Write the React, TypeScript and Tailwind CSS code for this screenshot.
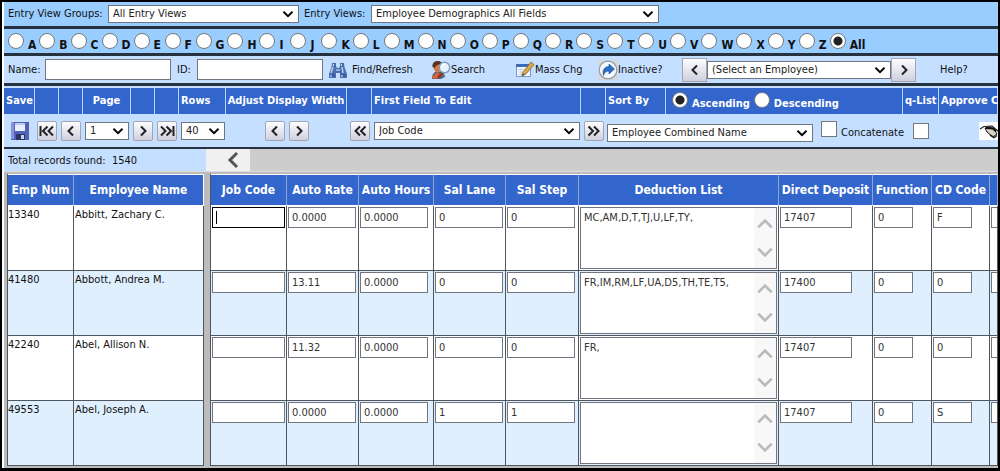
import { useState } from "react";
import type { ReactNode } from "react";

const letters: string[] = [..."ABCDEFGHIJKLMNOPQRSTUVWXYZ", "All"];

const fields = [
  "Job Code",
  "Auto Rate",
  "Auto Hours",
  "Sal Lane",
  "Sal Step",
  "Deduction List",
  "Direct Deposit",
  "Function",
  "CD Code",
  "",
];

const fieldWidths = [
  "w-[76px]",
  "w-[72px]",
  "w-[75px]",
  "w-[72px]",
  "w-[73px]",
  "w-[200px]",
  "w-[94px]",
  "w-[59px]",
  "w-[58px]",
  "",
];

const inputWidths = [
  "w-[73px]",
  "w-[68px]",
  "w-[68px]",
  "w-[68px]",
  "w-[68px]",
  "w-full",
  "w-[72px]",
  "w-[39px]",
  "w-[39px]",
  "w-[39px]",
];

const employees = [
  {
    id: "13340",
    name: "Abbitt, Zachary C.",
    values: ["", "0.0000", "0.0000", "0", "0", "MC,AM,D,T,TJ,U,LF,TY,", "17407", "0", "F", ""],
  },
  {
    id: "41480",
    name: "Abbott, Andrea M.",
    values: ["", "13.11", "0.0000", "0", "0", "FR,IM,RM,LF,UA,D5,TH,TE,T5,", "17400", "0", "0", ""],
  },
  {
    id: "42240",
    name: "Abel, Allison N.",
    values: ["", "11.32", "0.0000", "0", "0", "FR,", "17407", "0", "0", ""],
  },
  {
    id: "49553",
    name: "Abel, Joseph A.",
    values: ["", "0.0000", "0.0000", "1", "1", "", "17407", "0", "S", ""],
  },
];

const Chevron = ({ d, className }: { d: string; className: string }) => (
  <svg viewBox="0 0 16 16" className={className} fill="none" stroke="currentColor" aria-hidden="true">
    <path d={d} />
  </svg>
);

const LEFT = "M10 3.5 5.5 8l4.500 4.500";
const RIGHT = "M6 3.500 10.500 8 6 12.500";
const LEFT2 = "M8 3.500 3.500 8 8 12.500M13.500 3.500 9 8l4.500 4.500";
const RIGHT2 = "M2.500 3.500 7 8l-4.500 4.500M8 3.500 12.500 8 8 12.500";
const FIRST = "M1.500 3v10M8.500 3.500 4 8l4.500 4.500M14 3.500 9.500 8l4.500 4.500";
const LAST = "M14.500 3v10M2 3.500 6.500 8 2 12.500M7.500 3.500 12 8l-4.500 4.500";
const UP = "M2 11 8 5l6 6";
const DOWN = "M2 5l6 6 6-6";

const NavButton = ({ label, icon, big }: { label: string; icon: string; big?: boolean }) => (
  <button
    type="button"
    aria-label={label}
    className={`flex shrink-0 items-center justify-center border border-[#a3a5b3] bg-linear-to-b from-[#fdfdfe] to-[#cfd0de] text-[#222] ${
      big ? "h-6 w-[25px]" : "h-5 w-5 rounded-xs"
    }`}
  >
    <Chevron d={icon} className="h-4 w-4 stroke-2" />
  </button>
);

const Select = ({ label, value, className }: { label: string; value: string; className: string }) => (
  <div className={`relative shrink-0 ${className}`}>
    <select
      aria-label={label}
      className="block h-[18px] w-full appearance-none border border-[#6f7680] bg-white pl-1 text-[11px] leading-4 text-[#222]"
    >
      <option>{value}</option>
    </select>
    <Chevron d={DOWN} className="pointer-events-none absolute top-[3px] right-[5px] h-3 w-3 stroke-[2.5] text-black" />
  </div>
);

const Radio = ({
  name,
  label,
  checked,
  onChange,
  className,
}: {
  name: string;
  label: string;
  checked: boolean;
  onChange: () => void;
  className: string;
}) => (
  <label className={`flex shrink-0 items-start font-bold ${className}`}>
    <input
      type="radio"
      name={name}
      checked={checked}
      onChange={onChange}
      className="h-4 w-4 shrink-0 appearance-none rounded-full border border-[#777] bg-white checked:bg-[radial-gradient(circle,#222_4px,#fff_5px)]"
    />
    <span className="min-w-2 pt-1 leading-4">{label}</span>
  </label>
);

const BinocularsIcon = () => (
  <svg viewBox="0 0 20 18" className="h-[18px] w-5" aria-hidden="true">
    <path d="M4 2h4v3l1 2h2l1-2V2h4l.5 4L19 13v4h-7v-5H8v5H1v-4l2.500-7z" fill="#4c72b3" />
    <path d="M4.500 2.500h3v3h-3zM12.500 2.500h3v3h-3zM2 13h5v3H2zM13 13h5v3h-5z" fill="#3a5c9c" />
    <path d="M5 6 3 12M14 6l1 6M5.500 3v2M13.500 3v2M3 14v2M14 14v2" stroke="#c6daf5" strokeWidth="1.300" />
    <path d="M8 8h4v2H8z" fill="#8eabdc" />
  </svg>
);

const SearchIcon = () => (
  <svg viewBox="0 0 20 20" className="h-5 w-5" aria-hidden="true">
    <path d="M1 19c0-5 2-7 5-8l5 1c2 1 3 3 3 5l-4 2z" fill="#5a6684" />
    <path d="m1 18 5-6 3 2-4 5z" fill="#e0602c" />
    <ellipse cx="6.500" cy="7" rx="4" ry="5" fill="#d9793c" />
    <path d="M1.500 7C1 2.500 4 1 7 1c3 0 4 2 4 3L6 5 3.500 8z" fill="#5b3322" />
    <path d="m8 17 3-4" stroke="#8d3920" strokeWidth="2.500" strokeLinecap="round" />
    <circle cx="13.500" cy="7.500" r="5.200" fill="#e4f3fd" stroke="#7f9cbb" strokeWidth="1.400" />
    <path d="M10.500 7c.5-2 2-3 3.500-3" stroke="#fff" strokeWidth="1.500" fill="none" />
  </svg>
);

const MassChangeIcon = () => (
  <svg viewBox="0 0 20 18" className="h-[18px] w-5" aria-hidden="true">
    <path d="M1.500 3.500h14v12h-14z" fill="#f5f9ff" stroke="#7896c5" />
    <path d="M1 3h15v3H1z" fill="#3d68b8" />
    <path d="M3 8.500h7M3 11h5M3 13.500h4M6 7v8" stroke="#c3d3ea" />
    <path d="m16 1 3 2.500L11 13l-4 2 1-4z" fill="#dba94b" stroke="#7d6535" strokeWidth=".8" />
    <path d="m7 15 1.200-2.500 1.300 1.300z" fill="#4a3b25" />
  </svg>
);

const InactiveIcon = () => (
  <svg viewBox="0 0 20 20" className="h-5 w-5" aria-hidden="true">
    <path d="M0 0h20v20H0z" fill="#d5d7da" />
    <circle cx="10" cy="10" r="8.800" fill="#f4f8fc" stroke="#8f9cae" strokeWidth="1.200" />
    <path d="M5.500 15.500C4 10 6.500 6.500 11 6.500V4l5.500 5L11 14v-3c-2.500 0-4.500 1-5.500 4.500z" fill="#2c6fc4" stroke="#174c94" strokeWidth=".6" />
  </svg>
);

const SaveIcon = () => (
  <svg viewBox="0 0 18 18" className="h-[18px] w-[18px]" aria-hidden="true">
    <path d="M0 0h18v18H0z" fill="#5560b8" />
    <path d="M0 0h3v17H0z" fill="#8791dc" />
    <path d="M4 1h10v8H4z" fill="#e6effb" />
    <path d="M4 1h10v2H4z" fill="#b9cdf0" />
    <path d="M5 12h9v6H5z" fill="#2b3468" />
    <path d="M10 13h3v4h-3z" fill="#c5d1ee" />
  </svg>
);

const ApproveIcon = () => (
  <svg viewBox="0 0 24 18" className="h-[18px] w-6 shrink-0 bg-white" aria-hidden="true">
    <path d="m1 7 4-2.500 8-.5 7 6" fill="none" stroke="#222" strokeWidth="1.200" />
    <path d="m6 6 2 4 6 5 4-3-3-5-5-2z" fill="#d8d3c0" stroke="#111" />
    <path d="m7 6 7 .5 3 3" fill="none" stroke="#111" strokeWidth="2" />
    <path d="m11 13 4 2.500 3-2" fill="none" stroke="#222" strokeWidth="1.500" />
  </svg>
);

const HeadCell = ({ children, className = "" }: { children?: ReactNode; className?: string }) => (
  <div className={`flex h-[26px] items-center border-r border-[#b5d5ff] bg-[#3366cc] whitespace-nowrap ${className}`}>
    {children}
  </div>
);

const Checkbox = ({ label }: { label: string }) => (
  <input type="checkbox" aria-label={label} className="h-4 w-4 shrink-0 appearance-none border border-[#777] bg-white" />
);

const ActionButton = ({ icon, text, className }: { icon: ReactNode; text: string; className: string }) => (
  <button type="button" className={`flex shrink-0 items-center ${className}`}>
    {icon}
    {text}
  </button>
);

const headCell = "border-r border-[#8fa6cf] p-0 text-center whitespace-nowrap overflow-hidden";
const bodyCell = "border-r border-b border-[#50565e] p-0 align-top overflow-hidden";

const App = () => {
  const [letter, setLetter] = useState("All");
  const [order, setOrder] = useState("Ascending");

  return (
    <main className="overflow-hidden border-2 border-b-[3px] border-black bg-white pl-[2px] font-['DejaVu_Sans_Condensed','DejaVu_Sans',sans-serif] text-[11px] leading-4 text-[#111]">
      {/* Entry views */}
      <div className="flex h-6 items-center bg-[#99ccff] pl-1 whitespace-nowrap">
        <span className="w-[100px] shrink-0">Entry View Groups:</span>
        <Select label="Entry View Groups" value="All Entry Views" className="w-[191px]" />
        <span className="ml-[5px] w-[67px] shrink-0">Entry Views:</span>
        <Select label="Entry Views" value="Employee Demographics All Fields" className="w-[288px]" />
      </div>

      {/* Letter filter */}
      <div className="flex h-[30px] items-start border-y-[3px] border-[#26323f] bg-[#99ccff] pt-1 pl-1 text-xs">
        {letters.map((l) => (
          <Radio
            key={l}
            name="letter"
            label={l}
            checked={letter === l}
            onChange={() => setLetter(l)}
            className="mr-[3px] gap-1"
          />
        ))}
      </div>

      {/* Find bar */}
      <div className="flex h-[27px] items-center bg-[#c4dfff] pl-1 whitespace-nowrap">
        <label htmlFor="name" className="w-[37px] shrink-0">Name:</label>
        <input id="name" className="h-[21px] w-[126px] shrink-0 border border-[#6f7680] bg-white px-1" />
        <label htmlFor="emp-id" className="ml-[6px] w-5 shrink-0">ID:</label>
        <input id="emp-id" className="h-[21px] w-[126px] shrink-0 border border-[#6f7680] bg-white px-1" />
        <ActionButton icon={<BinocularsIcon />} text="Find/Refresh" className="ml-[5px] w-[103px] gap-1" />
        <ActionButton icon={<SearchIcon />} text="Search" className="w-[84px]" />
        <ActionButton icon={<MassChangeIcon />} text="Mass Chg" className="w-[83px]" />
        <ActionButton icon={<InactiveIcon />} text="Inactive?" className="w-[84px]" />
        <NavButton label="Previous employee" icon={LEFT} big />
        <Select label="Employee" value="(Select an Employee)" className="w-[184px]" />
        <NavButton label="Next employee" icon={RIGHT} big />
        <a href="#help" className="ml-6">Help?</a>
      </div>

      {/* Paging and sorting */}
      <div className="grid grid-cols-[31px_24px_24px_48px_24px_24px_47px_121px_25px_209px_25px_60px_237px_36px_minmax(0,1fr)] border-t-[3px] border-b-2 border-[#26323f] bg-[#c4dfff] pt-[2px]">
        <div className="contents font-bold text-white">
          <HeadCell className="pl-[2px]">Save</HeadCell>
          <HeadCell />
          <HeadCell />
          <HeadCell className="justify-center">Page</HeadCell>
          <HeadCell />
          <HeadCell />
          <HeadCell className="pl-[2px]">Rows</HeadCell>
          <HeadCell className="justify-center">Adjust Display Width</HeadCell>
          <HeadCell />
          <HeadCell className="pl-[2px]">First Field To Edit</HeadCell>
          <HeadCell />
          <HeadCell className="pl-[2px]">Sort By</HeadCell>
          <HeadCell className="pt-[2px] pl-[6px]">
            {["Ascending", "Descending"].map((o) => (
              <Radio
                key={o}
                name="order"
                label={o}
                checked={order === o}
                onChange={() => setOrder(o)}
                className="mr-1 gap-1"
              />
            ))}
          </HeadCell>
          <HeadCell className="pl-[2px]">q-List</HeadCell>
          <HeadCell className="pl-[2px]">Approve C</HeadCell>
        </div>

        <div className="flex h-[33px] items-center justify-center">
          <button type="button" aria-label="Save"><SaveIcon /></button>
        </div>
        <div className="flex items-center justify-center"><NavButton label="First page" icon={FIRST} /></div>
        <div className="flex items-center justify-center"><NavButton label="Previous page" icon={LEFT} /></div>
        <div className="flex items-center pl-[2px]"><Select label="Page" value="1" className="w-11" /></div>
        <div className="flex items-center justify-center"><NavButton label="Next page" icon={RIGHT} /></div>
        <div className="flex items-center justify-center"><NavButton label="Last page" icon={LAST} /></div>
        <div className="flex items-center pl-[2px]"><Select label="Rows" value="40" className="w-11" /></div>
        <div className="flex items-center justify-center gap-1">
          <NavButton label="Narrower" icon={LEFT} />
          <NavButton label="Wider" icon={RIGHT} />
        </div>
        <div className="flex items-center justify-center"><NavButton label="Previous fields" icon={LEFT2} /></div>
        <div className="flex items-center pl-[2px]"><Select label="First Field To Edit" value="Job Code" className="w-[206px]" /></div>
        <div className="flex items-center justify-center"><NavButton label="Next fields" icon={RIGHT2} /></div>
        <div className="col-span-2 flex items-center gap-2 pl-px">
          <Select label="Sort By" value="Employee Combined Name" className="mt-1 w-[206px]" />
          <label className="flex items-start gap-1">
            <Checkbox label="Concatenate" />
            <span className="pt-1">Concatenate</span>
          </label>
        </div>
        <div className="flex items-center justify-center"><Checkbox label="q-List" /></div>
        <div className="flex items-center overflow-hidden pl-10"><ApproveIcon /></div>
      </div>

      {/* Record count and horizontal scroll bar */}
      <div className="flex h-[22px] bg-[#cdcdcd]">
        <div className="flex w-[202px] shrink-0 items-center bg-[#c4dfff] pt-[2px] pl-1 whitespace-pre">Total records found:  1540</div>
        <button type="button" aria-label="Scroll left" className="flex w-11 shrink-0 items-center bg-[#f0f0f0] pl-5 text-[#555]">
          <Chevron d="M11 1 4 8l7 7" className="h-4 w-4 stroke-3" />
        </button>
      </div>

      {/* Employee grid */}
      <div className="flex items-start gap-[6px] border-t border-[#ddd] bg-[#bcbcbc] pt-[2px] pb-[2px] pl-[3px]">
        <table className="w-[197px] shrink-0 table-fixed border-separate border-spacing-0 border-l border-[#50565e] text-[11px]">
          <thead>
            <tr className="h-8 bg-[#3366cc] text-xs text-white">
              <th className="w-[66px] border-y border-r border-y-white border-r-[#8fa6cf] p-0 text-center whitespace-nowrap">Emp Num</th>
              <th className="border-y border-r border-white p-0 text-center whitespace-nowrap">Employee Name</th>
            </tr>
          </thead>
          <tbody>
            {employees.map((e) => (
              <tr key={e.id} className="h-[65px] bg-white even:bg-[#dfeffe]">
                <td className={`${bodyCell} pt-px`}>{e.id}</td>
                <td className={`${bodyCell} pt-px pl-px`}>{e.name}</td>
              </tr>
            ))}
          </tbody>
        </table>

        <div className="min-w-0 flex-1 overflow-hidden">
          <table className="w-full table-fixed border-separate border-spacing-0 border-l border-[#50565e] text-[11px]">
            <thead>
              <tr className="h-8 bg-[#3366cc] text-xs text-white">
                {fields.map((f, i) => (
                  <th key={i} className={`${headCell} ${fieldWidths[i]} border-y border-y-white`}>{f}</th>
                ))}
              </tr>
            </thead>
            <tbody>
              {employees.map((e, row) => (
                <tr key={e.id} className="h-[65px] bg-white even:bg-[#dfeffe]">
                  {e.values.map((v, i) => (
                    <td key={i} className={`${bodyCell} pt-px pl-px`}>
                      {fields[i] === "Deduction List" ? (
                        <div className="mr-px flex h-[62px] border border-[#6f7680] bg-white">
                          <textarea
                            aria-label={`Deduction List ${e.name}`}
                            defaultValue={v}
                            className="min-w-0 flex-1 resize-none overflow-hidden px-[3px] py-[2px] leading-4 text-[#333]"
                          />
                          <div className="flex w-[22px] flex-col justify-between bg-[#f8f8f8] py-[7px] text-[#bbb]">
                            <button type="button" aria-label="Scroll up" className="flex justify-center">
                              <Chevron d={UP} className="h-[18px] w-[18px] stroke-[2.5]" />
                            </button>
                            <button type="button" aria-label="Scroll down" className="flex justify-center">
                              <Chevron d={DOWN} className="h-[18px] w-[18px] stroke-[2.5]" />
                            </button>
                          </div>
                        </div>
                      ) : (
                        <div className="relative">
                          <input
                            aria-label={`${fields[i]} ${e.name}`}
                            defaultValue={v}
                            className={`block h-[21px] border bg-white px-[3px] text-[#333] ${inputWidths[i]} ${
                              row === 0 && i === 0 ? "border-black" : "border-[#6f7680]"
                            }`}
                          />
                          {/* text cursor of the active field */}
                          {row === 0 && i === 0 && <span className="absolute top-1 left-1 h-[13px] w-px bg-black" />}
                        </div>
                      )}
                    </td>
                  ))}
                </tr>
              ))}
            </tbody>
          </table>
        </div>
      </div>
    </main>
  );
};

export default App;
